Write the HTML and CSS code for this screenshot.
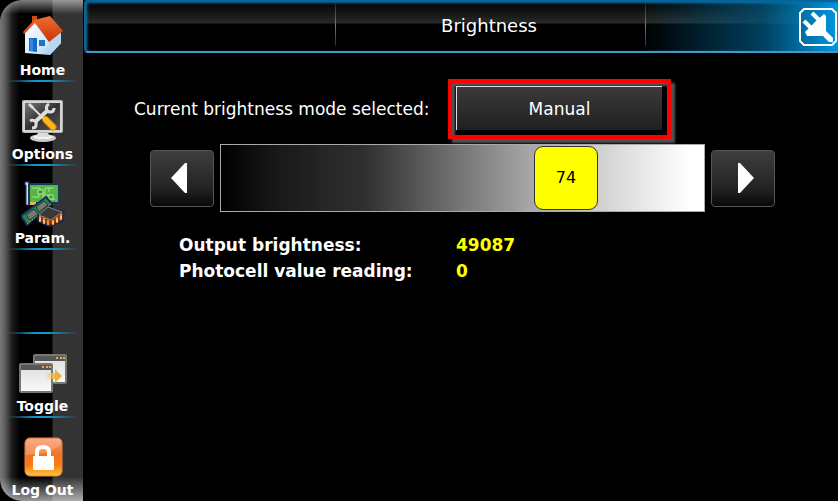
FILE: index.html
```html
<!DOCTYPE html>
<html lang="en">
<head>
<meta charset="utf-8">
<title>Brightness</title>
<meta name="viewport" content="width=device-width, initial-scale=1">
<link rel="stylesheet" href="styles.css">
</head>
<body>
<div class="panel">

    <nav class="side">
        <a class="item" href="#home">
            <svg width="44" height="44" viewBox="0 0 44 44">
                <defs>
                    <linearGradient id="wall" x2="1" y2="1"><stop offset="0" stop-color="#fff"/><stop offset=".6" stop-color="#d5e8fb"/><stop offset="1" stop-color="#82b5e8"/></linearGradient>
                    <linearGradient id="roof" x2="0" y2="1"><stop offset="0" stop-color="#f06b32"/><stop offset="1" stop-color="#c63707"/></linearGradient>
                </defs>
                <path fill="#d64716" d="M11 1h5v9l-5 4z"/>
                <path fill="url(#wall)" d="M4 18 14 7l15 15 11-6v12L29 40 4 38z"/>
                <path fill="#b8d5f2" d="m28 25 12-11v14L29 40z"/>
                <path fill="url(#roof)" d="M13 5 29 1l13 15-14 11-14-19L3 19l-1-2z"/>
                <path fill="#176bc8" d="M8 23h8v14l-8-1z"/>
                <path fill="#3588e0" d="M9 24h3v12H9z"/>
                <path fill="#1b73cd" d="M18 25h6v6h-6z"/>
            </svg>
            <span>Home</span>
        </a>
        <a class="item" href="#options">
            <svg width="44" height="44" viewBox="0 0 44 44">
                <defs>
                    <linearGradient id="screen" x2="1" y2="1"><stop offset="0" stop-color="#777"/><stop offset=".5" stop-color="#333"/><stop offset="1" stop-color="#555"/></linearGradient>
                </defs>
                <ellipse cx="22" cy="39" rx="13" ry="4" fill="#ccc"/>
                <ellipse cx="22" cy="38" rx="10" ry="2" fill="#f4f4f4"/>
                <path fill="#ddd" d="M17 32h10l1 6H16z"/>
                <rect x="1" y="1" width="41" height="33" rx="2" fill="#b4b4b4"/>
                <rect x="2" y="2" width="39" height="31" rx="1" fill="#d5d5d5"/>
                <rect x="4" y="4" width="35" height="27" fill="url(#screen)"/>
                <path stroke="#ddd" stroke-width="4" d="M14 23 27 11"/>
                <path fill="none" stroke="#ddd" stroke-width="3" d="M28 5c-4 2-3 8 1 8 3 0 4-2 4-4M9 22c3-2 7 0 6 4 0 2-2 3-4 3"/>
                <path stroke="#ddd" stroke-width="2" d="m9 6 15 15"/>
                <path stroke="#ddd" stroke-width="3" d="m8 5 4 4"/>
                <path stroke="#d98b00" stroke-width="7" stroke-linecap="round" d="m25 21 7 7"/>
                <path stroke="#ffb81c" stroke-width="5" stroke-linecap="round" d="m24 20 8 8"/>
            </svg>
            <span>Options</span>
        </a>
        <a class="item" href="#param">
            <svg width="44" height="46" viewBox="0 0 44 46">
                <path fill="#ddd" stroke="#27356b" d="M4 1h4v23H5V4H4z"/>
                <path fill="#54b447" stroke="#18375e" stroke-width="2" d="M8 3h30v19H8z"/>
                <path fill="none" stroke="#a3e580" d="M11 7h8v5h5V7h9M11 16h7v-4M22 18v-4h7v4h5M28 7v4"/>
                <path fill="#398f38" stroke="#b4e89b" d="M17 9h5v4h-5zM28 14h4v4h-4z"/>
                <path fill="#eab83c" d="M9 21h6v3H9z"/>
                <path fill="#26874b" stroke="#172f5e" stroke-width="2" d="m0 35 25-19 6 7L6 44z"/>
                <path fill="#777" stroke="#1b3e27" d="m5 34 8-6 4 5-8 6zM15 26l8-6 4 4-9 7z"/>
                <path fill="none" stroke="#d5b84a" stroke-dasharray="2 1" d="m6 43 24-20"/>
                <path fill="#8a3c12" stroke="#1e2754" stroke-width="2" d="m17 35 10-9 16 5-1 9-14 5-11-5z"/>
                <path stroke="#f58a2c" stroke-width="2" d="M19 35v6M23 37v6M27 39v5M32 39v5M36 36v6M40 33v6"/>
                <path stroke="#fff1c0" d="M19 37v3M23 39v3M32 40v3M36 38v3M40 35v3"/>
                <path fill="#383838" stroke="#888" d="m18 34 9-8 14 5-11 8z"/>
            </svg>
            <span>Param.</span>
        </a>
        <div class="item"></div>
        <a class="item" href="#toggle">
            <svg width="50" height="42" viewBox="0 0 50 42">
                <defs>
                    <linearGradient id="win" x2="0" y2="1"><stop offset="0" stop-color="#ddd"/><stop offset="1" stop-color="#fafafa"/></linearGradient>
                    <linearGradient id="arrow"><stop offset="0" stop-color="#ffd36a" stop-opacity=".2"/><stop offset=".6" stop-color="#eeb13a"/></linearGradient>
                </defs>
                <rect x="16" y="2" width="32" height="28" rx="1" fill="url(#win)" stroke="#777" stroke-width="2"/>
                <path fill="#575757" d="M17 3h30v5H17z"/>
                <path fill="#e8ae3f" d="M38 4h2v2h-2zM42 4h2v2h-2zM45 4h2v2h-2z"/>
                <rect x="2" y="11" width="32" height="28" rx="1" fill="url(#win)" stroke="#777" stroke-width="2"/>
                <path fill="#575757" d="M3 12h30v5H3z"/>
                <path fill="#e8ae3f" d="M24 13h2v2h-2zM28 13h2v2h-2zM31 13h2v2h-2z"/>
                <path fill="url(#arrow)" d="M28 20h9v-4l7 7-7 7v-4h-9z"/>
            </svg>
            <span>Toggle</span>
        </a>
        <a class="item" href="#logout">
            <svg width="40" height="42" viewBox="0 0 40 42">
                <defs>
                    <linearGradient id="lock" x2="0" y2="1"><stop offset="0" stop-color="#f49a6b"/><stop offset=".45" stop-color="#f37224"/><stop offset=".7" stop-color="#f77b12"/><stop offset="1" stop-color="#ffc342"/></linearGradient>
                </defs>
                <rect x="2" y="1" width="37" height="38" rx="5" fill="url(#lock)" stroke="#e4824c"/>
                <path fill="#fff" fill-opacity=".2" d="M3 6q0-4 4-4h28q4 0 3 5-9 10-35 11z"/>
                <path fill="none" stroke="#fff" stroke-width="4" d="M14 20v-5q0-5 6-5t6 5v5"/>
                <rect x="10" y="19" width="21" height="14" rx="1" fill="#fff"/>
            </svg>
            <span>Log Out</span>
        </a>
    </nav>

    <div class="content">
        <header class="top">
            <div class="cell"></div>
            <h1 class="cell">Brightness</h1>
            <div class="cell cell-end">
                <button class="plug" type="button" aria-label="Connection">
                    <svg width="38" height="38" viewBox="0 0 38 38">
                        <path fill="none" stroke="#fff" stroke-width="2" d="M5 1h28l4 4v28l-4 4H5l-4-4V5z"/>
                        <path stroke="#fff" stroke-width="4" d="m13 5 8 8M5 13l8 8"/>
                        <path fill="#fff" d="m17 13 8-7 2 2v15l7 7v4h-4l-6-6H8l-2-4 4-4z"/>
                    </svg>
                </button>
            </div>
        </header>

        <main class="main">
            <div class="mode">
                <label for="mode">Current brightness mode selected:</label>
                <div class="frame"><button id="mode" type="button">Manual</button></div>
            </div>

            <div class="level">
                <button class="step" type="button" aria-label="Decrease">
                    <svg width="16" height="30" viewBox="0 0 16 30"><path fill="#fff" d="M16 0v30h-2L0 15 14 0z"/></svg>
                </button>
                <div class="slider" style="--value: 0.747">
                    <input type="range" id="level" min="0" max="99" value="74" aria-label="Brightness">
                    <output for="level">74</output>
                </div>
                <button class="step" type="button" aria-label="Increase">
                    <svg width="16" height="30" viewBox="0 0 16 30"><path fill="#fff" d="M0 0v30h2l14-15L2 0z"/></svg>
                </button>
            </div>

            <dl class="readings">
                <dt>Output brightness:</dt>
                <dd>49087</dd>
                <dt>Photocell value reading:</dt>
                <dd>0</dd>
            </dl>
        </main>
    </div>

</div>
<script>
var level = document.getElementById("level"),
    slider = level.parentNode,
    out = slider.querySelector("output"),
    steps = document.querySelectorAll(".step");

function update(){
    out.textContent = level.value;
    slider.style.setProperty("--value", level.value / level.max);
}
level.addEventListener("input", update);
steps[0].onclick = function(){ level.stepDown(); update(); };
steps[1].onclick = function(){ level.stepUp(); update(); };
</script>
</body>
</html>
```
FILE: styles.css
```css
*{box-sizing:border-box;}
body{margin:0;background:#000;color:#fff;font-family:"DejaVu Sans","Noto Sans",sans-serif;}
button{padding:0;font:inherit;color:inherit;cursor:pointer;}
svg{display:block;}
.panel{display:flex;min-height:100vh;}

/* left menu */
.side{flex:none;width:83px;border-radius:22px 0 0 22px;background:
    linear-gradient(rgba(255,255,255,.5),rgba(255,255,255,0) 14px),
    linear-gradient(0deg,rgba(255,255,255,.6),rgba(255,255,255,0) 24px),
    linear-gradient(90deg,#777,#5c5c5c 5px,#1c1c1c 12px,#000 20px,#000 52px,#333 53px);}
.side .item{display:flex;flex-direction:column;align-items:center;justify-content:flex-end;height:84px;padding:0 0 4px 2px;color:#fff;text-decoration:none;font:bold 14px/16px "DejaVu Sans",sans-serif;background:linear-gradient(90deg,transparent,#1597c8 40%,#1597c8 60%,transparent) bottom/72px 2px no-repeat;}
.side .item:first-child{height:82px;}
.side .item:last-child{height:83px;padding-bottom:3px;background:none;}
.side svg{margin-bottom:3px;}

/* title bar */
.content{flex:1;min-width:0;padding-left:1px;}
.top{display:grid;grid-template-columns:249fr 310fr 193fr;height:53px;border:solid #07649a;border-width:2px 0 2px 2px;border-bottom-color:#4597c8;border-radius:3px 0 0 4px;box-shadow:inset 1px 1px 3px #0879b8;background:
    linear-gradient(90deg,transparent 74%,rgba(0,85,125,.75) 90%,#0098e0),
    linear-gradient(#000,#282a27 21px,#000 22px);}
.top .cell{display:flex;align-items:center;justify-content:center;margin:0;font:18px/24px "DejaVu Sans",sans-serif;}
.top h1.cell{padding:0 2px 2px 0;}
.top .cell + .cell{background:linear-gradient(#0a3445,#1a9acb 50%,#18323c) left 2px/1px 42px no-repeat;}
.top .cell-end{justify-content:flex-end;padding-right:1px;}
.plug{border:0;background:none;}

/* brightness page */
.main{padding:26px 63px 0 50px;}
.mode{display:grid;grid-template-columns:314px 223px;align-items:center;font-size:17px;}
.frame{height:60px;padding:3px;border:4px solid #f00;background:#000;box-shadow:4px 4px 2px #505354,inset 3px 3px 2px #505354;}
.frame button{width:calc(100% - 3px);height:44px;margin-left:1px;border:0;border-top:1px solid #ddd;border-left:1px solid #ddd;background:linear-gradient(#3a3a3a,#202020);line-height:20px;}
.level{display:flex;align-items:center;gap:6px;margin:5px 0 0 16px;}
.step{display:flex;align-items:center;justify-content:center;flex:none;width:64px;height:57px;border:1px solid #555;border-radius:4px;background:linear-gradient(#3e3e3e,#222 70%,#080808);}
.step svg{margin-right:6px;}
.step:last-child svg{margin:0 0 0 6px;}
.slider{position:relative;flex:1;height:68px;border:1px solid #aaa;background:linear-gradient(90deg,#000,#181a18 12%,#303030 30%,#777 50%,#aaa 65%,#ddd 83%,#fff 97%);}
.slider input{-webkit-appearance:none;appearance:none;display:block;width:100%;height:66px;margin:0;background:none;}
.slider input::-webkit-slider-thumb{-webkit-appearance:none;width:64px;height:64px;border:1px solid #333;border-radius:9px;background:#ff0;}
.slider output{position:absolute;top:0;left:calc(var(--value) * (100% - 64px));width:64px;color:#000;font-size:16px;line-height:66px;text-align:center;pointer-events:none;}
.readings{display:grid;grid-template-columns:277px 1fr;margin:20px 0 0 45px;font-weight:bold;font-size:17px;line-height:26px;}
.readings dd{margin:0;color:#ff0;}
```
